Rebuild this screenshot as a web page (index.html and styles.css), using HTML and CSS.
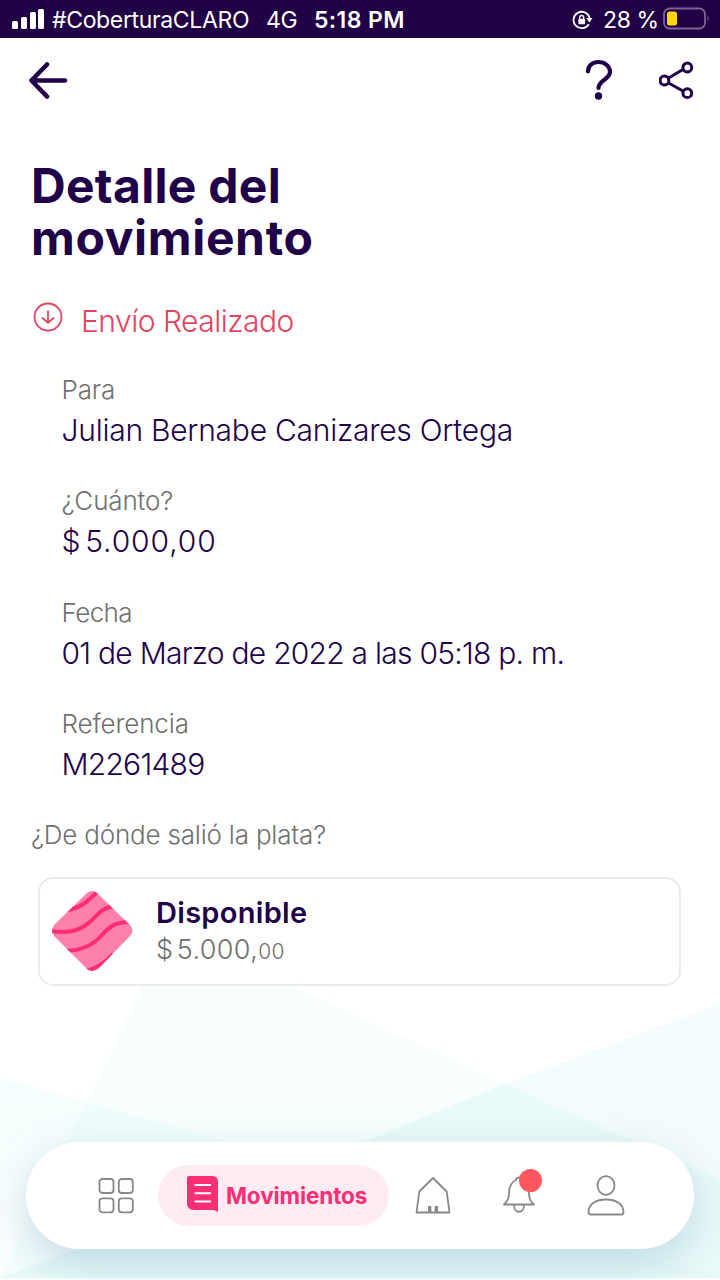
FILE: index.html
```html
<!DOCTYPE html>
<html lang="es">
<head>
<meta charset="utf-8">
<title>Detalle del movimiento</title>
<link rel="stylesheet" href="styles.css">
</head>
<body>
<div class="screen">
  <svg class="backdrop" viewBox="0 0 720 300" aria-hidden="true">
    <defs>
      <linearGradient id="fadeLeft" x1="0" x2="0" y1="0" y2="1"><stop offset="0" stop-color="#c8f8f5" stop-opacity=".2"/><stop offset="1" stop-color="#c8f0ee" stop-opacity=".08"/></linearGradient>
    </defs>
    <path d="M143 6H290L505 104L720 200V298H0Z" fill="#c8f8f3" fill-opacity=".15"/>
    <path d="M0 98L87 122L210 157L720 298H0Z" fill="url(#fadeLeft)"/>
    <path d="M720 24L505 104L365 161L0 298H720Z" fill="#bdf0f0" fill-opacity=".19"/>
    <path d="M505 104L365 161L0 298H720V200Z" fill="#baf3ea" fill-opacity=".07"/>
  </svg>

  <header class="status">
    <svg class="signal" viewBox="0 0 34 22"><rect x="0" y="13" width="6" height="8" rx="1.5"/><rect x="9" y="9" width="6" height="12" rx="1.5"/><rect x="18" y="4" width="6" height="17" rx="1.5"/><rect x="26" y="1" width="6" height="20" rx="1.5"/></svg>
    <span class="carrier">#CoberturaCLARO</span>
    <span class="network">4G</span>
    <span class="clock">5:18 PM</span>
    <svg class="lock" viewBox="0 0 22 20"><path d="M16.800 14.200A8.200 8.200 0 1 1 17.700 8" fill="none" stroke="#fff" stroke-width="1.8"/><path d="M14.200 8h6.300l-3.100 4.600z" fill="#fff"/><rect x="6.300" y="8.800" width="6.800" height="5.400" rx="1" fill="#fff"/><path d="M7.700 9V7.500a2 2 0 0 1 4 0V9" fill="none" stroke="#fff" stroke-width="1.3"/></svg>
    <span class="percent">28 %</span>
    <svg class="battery" viewBox="0 0 48 24"><rect x="1" y="1.500" width="41" height="20" rx="5.500" fill="none" stroke="#796494" stroke-width="1.8"/><path d="M44.500 8.200q2.200 3.300 0 6.600z" fill="#796494"/><rect x="4" y="4.500" width="10" height="14" rx="2.500" fill="#ffd60a"/></svg>
  </header>

  <nav class="toolbar">
    <svg class="back" viewBox="0 0 40 38"><path d="M37 19.500H3.500M19 3.500L3.500 19.500L19 35.500" /></svg>
    <svg class="help" viewBox="0 0 28 42"><path d="M3 12.500C3 6.500 7.500 3 13.500 3S25 7 25 13C25 20.500 13.500 21 13.500 29"/><circle cx="13.500" cy="37" r="3.700"/></svg>
    <svg class="share" viewBox="0 0 36 40"><path d="M9.500 18L24 9.500M9.500 23L24 31"/><circle cx="5.500" cy="20.500" r="4.400"/><circle cx="28.300" cy="7.500" r="4.400"/><circle cx="28.300" cy="33.200" r="4.400"/></svg>
  </nav>

  <main class="content">
    <h1 class="title">Detalle del movimiento</h1>
    <div class="kind">
      <svg class="down" viewBox="0 0 30 30"><circle cx="15" cy="15" r="13.500"/><path d="M15 8.500V20.500M9 15.500L15 20.800L21 15.500"/></svg>
      <span class="kind-text">Envío Realizado</span>
    </div>
    <dl class="details">
      <div class="row"><dt>Para</dt><dd class="person-name">Julian Bernabe Canizares Ortega</dd></div>
      <div class="row"><dt>¿Cuánto?</dt><dd class="money">$ 5.000,00</dd></div>
      <div class="row"><dt class="date-label">Fecha</dt><dd class="date">01 de Marzo de 2022 a las 05:18 p. m.</dd></div>
      <div class="row"><dt>Referencia</dt><dd class="reference">M2261489</dd></div>
    </dl>
    <p class="source">¿De dónde salió la plata?</p>
    <section class="card">
      <svg class="pocket" viewBox="0 0 82 82">
        <defs><clipPath id="tile"><path d="M36 3Q41-1 46 3L79 35Q84 41 79 46L47 79Q42 83 36 79L3 46Q-1 41 3 35Z"/></clipPath></defs>
        <g clip-path="url(#tile)"><rect width="82" height="82" fill="#ff80ac"/><path d="M16 20C30 18 36 12 48 0M-2 41C14 43 27 43 40 31C48 23 52 17 65 16M16 61C30 60 41 56 49 47C59 36 64 32 80 32M34 81C44 79 52 75 62 64"/></g>
      </svg>
      <div class="card-text"><strong class="name">Disponible</strong><span class="amount">$ 5.000,<small class="cents">00</small></span></div>
    </section>
  </main>

  <nav class="tabs">
    <svg class="grid" viewBox="0 0 36 36"><rect x="1.500" y="1" width="14" height="14" rx="3"/><rect x="20.800" y="1" width="14" height="14" rx="3"/><rect x="1.500" y="20.300" width="14" height="14" rx="3"/><rect x="20.800" y="20.300" width="14" height="14" rx="3"/></svg>
    <a class="active"><svg class="doc" viewBox="0 0 32 37"><path d="M2 0H25Q31 0 31 6V36L27 34H7Q0 34 0 27V2Q0 0 2 0Z" fill="#fc2d73"/><path d="M7.500 9H24M7.500 17.300H24M7.500 25.500H24" stroke="#fff" stroke-width="2"/></svg><span class="tab-name">Movimientos</span></a>
    <svg class="home" viewBox="0 0 36 38"><path d="M18 1L31.700 14.500L34.500 35.500H1.500L4.300 14.500ZM13 30H15.500V35.500M20.500 35.500V30H23M13.800 30.500V35.500M22.200 30.500V35.500"/></svg>
    <span class="bell-wrap"><svg class="bell" viewBox="0 0 32 38"><path d="M13 4Q13 1.500 16 1.500T19 4C25 6 26 12 26 18Q26 24 31 28.500H1Q6 24 6 18C6 11 8 6 13 4ZM11 29C11 38 21 38 21 29"/></svg><i class="dot"></i></span>
    <svg class="person" viewBox="0 0 38 41"><ellipse cx="19" cy="10.500" rx="8.500" ry="9.300"/><path d="M1.500 37C1.500 29 9 24.500 19 24.500S36.500 29 36.500 37Q36.500 39.500 34 39.500H4Q1.500 39.500 1.500 37Z"/></svg>
  </nav>
</div>
</body>
</html>
```

FILE: styles.css
```css
* { box-sizing: border-box; }
body { margin: 0; background: #fff; font-family: Inter, "Liberation Sans", sans-serif; color: #200149; }
.screen { position: relative; width: 720px; height: 1280px; overflow: hidden; display: flex; flex-direction: column; }
svg { flex: none; display: block; }
.backdrop { position: absolute; left: 0; bottom: 0; width: 720px; height: 300px; z-index: -1; }

.status { height: 38px; flex: none; background: #200146; color: #fff; display: flex; align-items: center; padding: 2px 11px 0 12px; font-size: 23px; line-height: 36px; white-space: nowrap; }
.status > * { flex: none; }
.signal { width: 34px; height: 22px; fill: #fff; margin: -3px 6px 0 0; }
.carrier { width: 214px; letter-spacing: -.35px; }
.network { width: 48px; letter-spacing: -.3px; }
.clock { width: 258px; font-weight: 600; letter-spacing: .4px; }
.lock { width: 22px; height: 20px; margin-right: 9px; }
.percent { width: 60px; letter-spacing: -.4px; }
.battery { width: 48px; height: 24px; margin-top: -2px; }

.toolbar { height: 84px; flex: none; display: flex; align-items: center; padding: 0 25px 0 28px; }
.toolbar svg { fill: none; stroke: #200149; stroke-linecap: round; stroke-linejoin: round; }
.back { width: 40px; height: 38px; stroke-width: 4.6; }
.help { width: 28px; height: 42px; stroke-width: 4.2; margin-left: 517px; }
.toolbar .help circle { fill: #200149; stroke: none; }
.share { width: 36px; height: 40px; stroke-width: 3; margin-left: auto; }

.content { padding: 38px 32px 0; }
.title { margin: 0 0 0 -1px; width: 300px; font-size: 48px; line-height: 52px; font-weight: 700; letter-spacing: .65px; }
.title::first-line { letter-spacing: .3px; }
.kind { display: flex; height: 40px; margin-top: 37px; color: #e5425f; font-size: 30px; line-height: 40px; letter-spacing: -.5px; }
.down { width: 30px; height: 30px; margin: 1px 18px 0 1px; fill: none; stroke: #e5425f; stroke-width: 1.8; }
.kind-text, .details dd { font-weight: 300; }
.details { margin: 29px 0 0 29.500px; }
.row { height: 111.3px; }
.details dt, .source { font-size: 26px; line-height: 40px; font-weight: 300; color: #707070; letter-spacing: -.15px; }
.details .date-label { letter-spacing: -.6px; }
.details dd { margin: 0; font-size: 30px; line-height: 41.500px; white-space: nowrap; }
.person-name { letter-spacing: -.25px; }
.money { letter-spacing: .9px; word-spacing: -5.500px; }
.date, .reference { letter-spacing: -.75px; }
.details + .source { margin: 0 0 0 -1px; letter-spacing: -.2px; }
.card { margin: 22px 7px 0 6px; height: 109px; border: 2px solid #ebebeb; border-radius: 15px; background: #fff; display: flex; align-items: center; padding-left: 11px; }
.pocket { width: 82px; height: 82px; margin-top: -2px; }
.pocket path { fill: none; stroke: #fc2d73; stroke-width: 4; }
.card-text { margin: 2px 0 0 23px; display: flex; flex-direction: column; }
.name { font-size: 29px; line-height: 37px; font-weight: 600; letter-spacing: .3px; }
.amount { font-size: 27px; line-height: 38px; font-weight: 300; color: #707070; letter-spacing: .35px; word-spacing: -4.500px; }
.cents { font-size: 21px; }

.tabs { position: absolute; left: 26px; top: 1142px; width: 668px; height: 107px; border-radius: 54px; background: #fff; box-shadow: 0 14px 42px rgba(120, 160, 195, .36); display: flex; align-items: center; padding-left: 72px; }
.tabs > svg, .bell { fill: none; stroke: #888; stroke-width: 1.8; stroke-linejoin: round; }
.grid { width: 36px; height: 36px; }
.active { margin-left: 24px; width: 231px; height: 61px; border-radius: 31px; background: #ffecf2; display: flex; align-items: center; padding-left: 29px; color: #fc2d73; }
.doc { width: 32px; height: 37px; margin-top: -2px; }
.tab-name { font-size: 22.500px; font-weight: 700; margin-left: 7px; letter-spacing: -.1px; }
.home { width: 36px; height: 38px; margin-left: 26px; }
.bell-wrap { position: relative; margin-left: 52px; margin-top: -2px; }
.bell { width: 32px; height: 38px; }
.dot { position: absolute; left: 16px; top: -7px; width: 23px; height: 23px; border-radius: 50%; background: #ff5660; }
.person { width: 38px; height: 41px; margin-left: 52px; }
```
